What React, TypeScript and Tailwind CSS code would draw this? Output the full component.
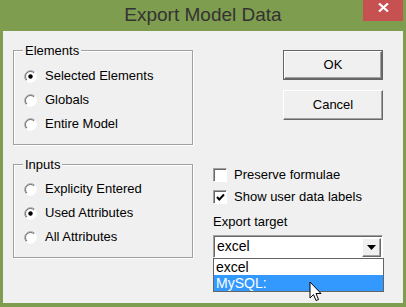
import React from 'react';

const font = { fontFamily: '"Liberation Sans", Arial, sans-serif' };

function Radio({ checked }: { checked?: boolean }) {
  return (
    <svg width="13" height="13" viewBox="0 0 13 13" className="shrink-0">
      <circle cx="6.5" cy="6.5" r="6" fill="#ffffff" />
      <path d="M2.26 10.74 A6 6 0 0 1 10.74 2.26" stroke="#a0a0a0" strokeWidth="1" fill="none" />
      <path d="M2.96 10.04 A5 5 0 0 1 10.04 2.96" stroke="#696969" strokeWidth="1" fill="none" />
      <path d="M10.74 2.26 A6 6 0 0 1 2.26 10.74" stroke="#ffffff" strokeWidth="1" fill="none" />
      {checked && <circle cx="6.5" cy="6.5" r="2.2" fill="#000000" />}
    </svg>
  );
}

function RadioRow({ label, checked }: { label: string; checked?: boolean }) {
  return (
    <div className="h-6 flex items-center gap-[8px]">
      <Radio checked={checked} />
      <span>{label}</span>
    </div>
  );
}

function CheckBox({ checked }: { checked?: boolean }) {
  return (
    <div className="w-[14px] h-[14px] shrink-0 bg-white border border-t-[#a0a0a0] border-l-[#a0a0a0] border-r-white border-b-white shadow-[inset_1px_1px_0_#696969] flex items-center justify-center">
      {checked && (
        <svg width="9" height="9" viewBox="0 0 9 9">
          <path d="M1 4 L3.3 6.5 L8 1.5" stroke="#000" strokeWidth="1.9" fill="none" />
        </svg>
      )}
    </div>
  );
}

function Button({ label, primary }: { label: string; primary?: boolean }) {
  const inner = (
    <div className="h-full w-full flex items-center justify-center bg-[#f0f0f0] border border-t-white border-l-white border-r-[#696969] border-b-[#696969] shadow-[inset_-1px_-1px_0_#a0a0a0]">
      {label}
    </div>
  );
  return primary ? (
    <div className="w-[100px] h-[30px] self-end border border-[#646464]">{inner}</div>
  ) : (
    <div className="w-[100px] h-[30px] self-end">{inner}</div>
  );
}

function GroupBox({ title, children, h, pt }: { title: string; children: React.ReactNode; h: string; pt: string }) {
  return (
    <div className={`relative border border-[#a0a0a0] shadow-[1px_1px_0_#ffffff,inset_1px_1px_0_#ffffff] pl-[10px] ${h} ${pt}`}>
      <span className="absolute -top-[8px] left-[9px] px-[2px] leading-[15px] bg-[#f0f0f0]">{title}</span>
      {children}
    </div>
  );
}

export default function App() {
  return (
    <div className="relative w-[406px] h-[307px] bg-[#7f9d4f] flex flex-col text-[13px] text-black" style={font}>
      {/* Title bar */}
      <div className="h-[31px] shrink-0 flex items-center justify-center">
        <span className="text-[19px] text-[#333333] -mt-[1px]">Export Model Data</span>
        <div className="absolute right-[3px] top-0 w-[40px] h-[21px] bg-[#c75050] flex items-start justify-center pt-[3px]">
          <svg width="11" height="9" viewBox="0 0 11 9">
            <path d="M1 0.5 L10 8.5 M10 0.5 L1 8.5" stroke="#ffffff" strokeWidth="2.2" />
          </svg>
        </div>
      </div>

      {/* Client */}
      <div className="mx-[3px] w-[400px] h-[272px] bg-[#f0f0f0] flex pl-[10px] pr-[20px] gap-[20px]">
        <div className="w-[180px] flex flex-col">
          <div className="mt-[19px]">
            <GroupBox title="Elements" h="h-[95px]" pt="pt-[13px]">
              <RadioRow label="Selected Elements" checked />
              <RadioRow label="Globals" />
              <RadioRow label="Entire Model" />
            </GroupBox>
          </div>
          <div className="mt-[19px]">
            <GroupBox title="Inputs" h="h-[94px]" pt="pt-[12px]">
              <RadioRow label="Explicity Entered" />
              <RadioRow label="Used Attributes" checked />
              <RadioRow label="All Attributes" />
            </GroupBox>
          </div>
        </div>

        <div className="w-[170px] flex flex-col">
          <div className="mt-[19px] flex flex-col gap-[10px]">
            <Button label="OK" primary />
            <Button label="Cancel" />
          </div>
          <div className="mt-[44px] h-[22px] flex items-center gap-[7px]">
            <CheckBox />
            <span>Preserve formulae</span>
          </div>
          <div className="h-[22px] flex items-center gap-[7px]">
            <CheckBox checked />
            <span>Show user data labels</span>
          </div>
          <div className="mt-[6px] h-[15px] leading-[15px]">Export target</div>
          <div className="mt-[6px] h-[23px] bg-white border border-t-[#a0a0a0] border-l-[#a0a0a0] border-r-white border-b-white shadow-[inset_1px_1px_0_#696969] flex items-center pl-[3px] pr-[1px] text-[14px]">
            <span className="flex-1">excel</span>
            <div className="w-[19px] h-[19px] mt-[1px] bg-[#f0f0f0] border border-t-white border-l-white border-r-[#696969] border-b-[#696969] shadow-[inset_-1px_-1px_0_#a0a0a0] flex items-center justify-center">
              <svg width="9" height="5" viewBox="0 0 9 5">
                <path d="M0 0 L9 0 L4.5 5 Z" fill="#000" />
              </svg>
            </div>
          </div>
          <div className="w-[171px] h-[34px] bg-white border border-[#646464] text-[14px] leading-[16px]">
            <div className="h-[16px] pl-[2px]">excel</div>
            <div className="h-[16px] pl-[2px] bg-[#3399ff] text-white">MySQL:</div>
          </div>
        </div>
      </div>

      {/* Mouse cursor */}
      <svg className="absolute left-[309px] top-[281px]" width="14" height="22" viewBox="0 0 14 22">
        <path d="M1 1 L1 17 L4.5 13.5 L7 19.5 L9.5 18.5 L7 12.5 L12 12.5 Z" fill="#ffffff" stroke="#000000" strokeWidth="1" strokeLinejoin="miter" />
      </svg>
    </div>
  );
}
